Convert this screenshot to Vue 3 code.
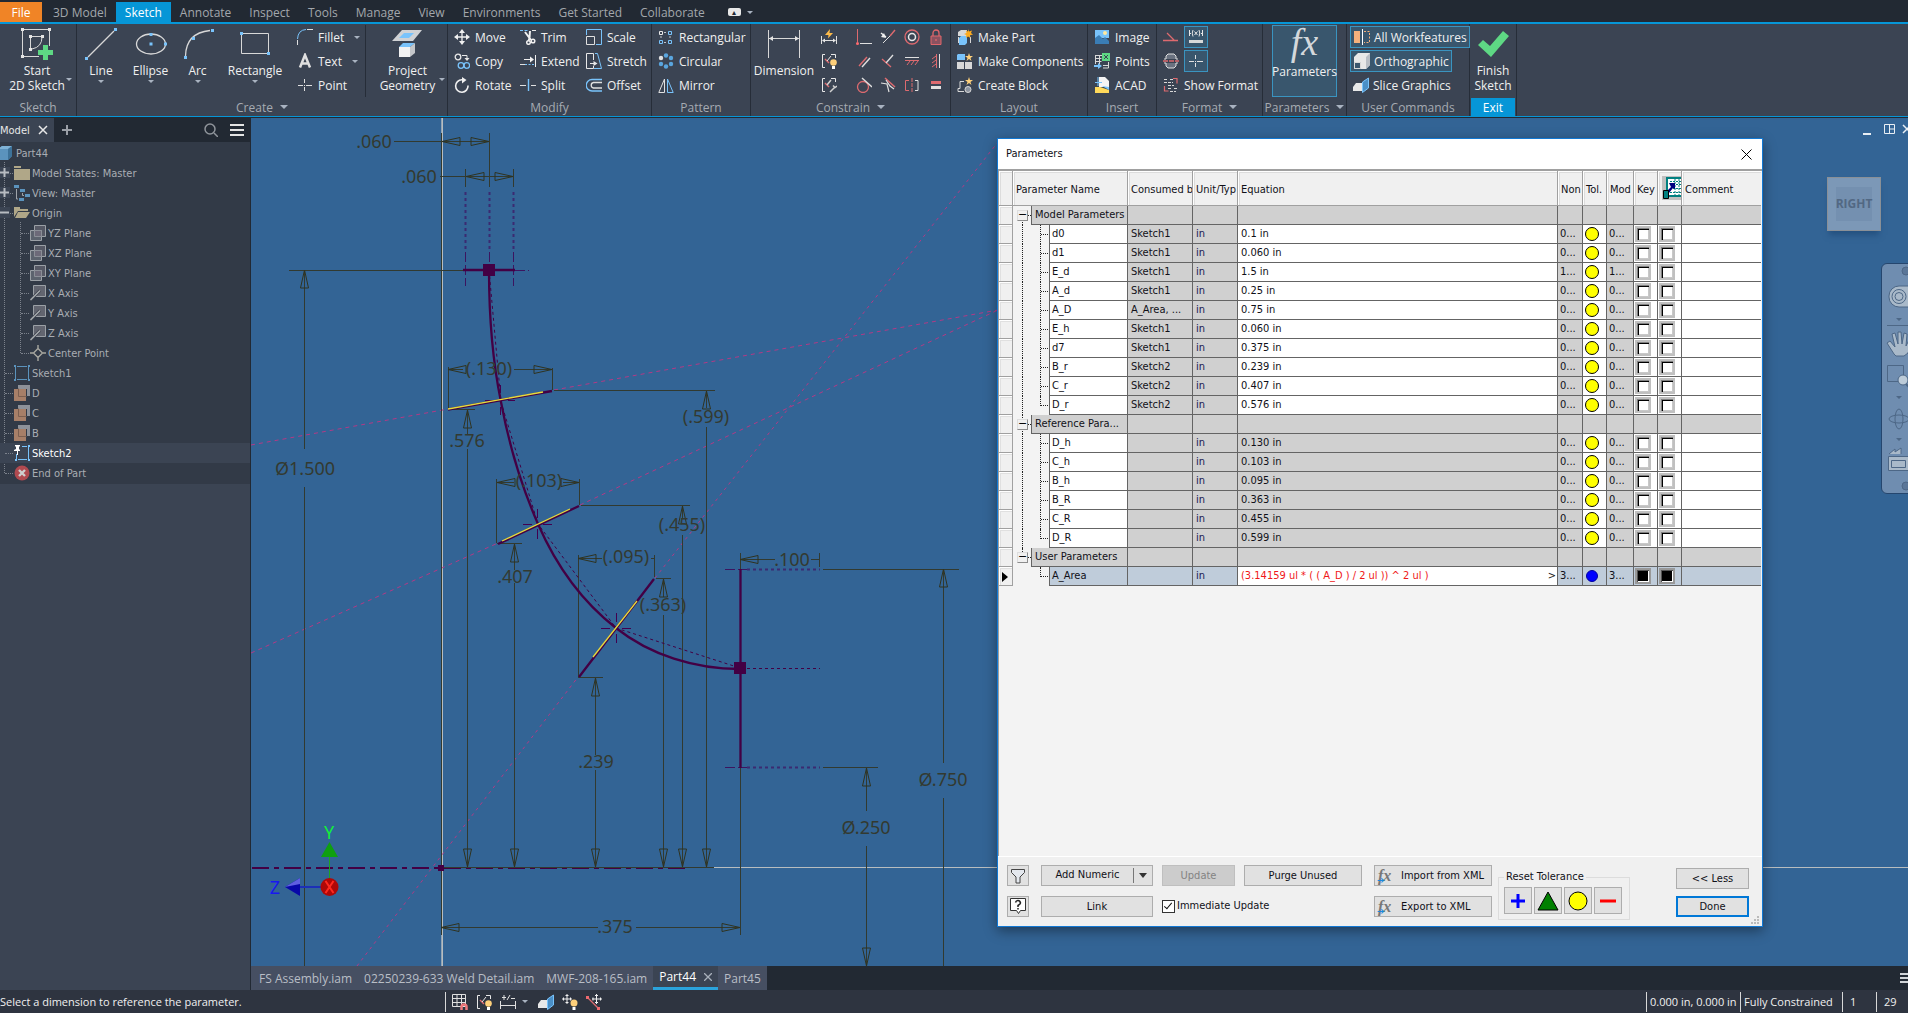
<script setup>
import { ref } from 'vue'

const menuTabs = [
  '3D Model', 'Sketch', 'Annotate', 'Inspect', 'Tools', 'Manage', 'View',
  'Environments', 'Get Started', 'Collaborate',
]

const big = (icon, lines, w, arrow = '') => ({ type: 'big', icon, lines, w, arrow })
const col = (w, items) => ({ type: 'col', w, items })

const panels = [
  { title: 'Sketch', w: 77, groups: [big('start', ['Start', '2D Sketch'], 74, 'side')] },
  {
    title: 'Create', w: 371, more: true, groups: [
      big('line', ['Line'], 48, 'below'),
      big('ellipse', ['Ellipse'], 51, 'below'),
      big('arc', ['Arc'], 43, 'below'),
      big('rect', ['Rectangle'], 72, 'below'),
      col(74, [['fillet', 'Fillet', true], ['text', 'Text', true], ['point', 'Point']]),
      { type: 'sep' },
      big('project', ['Project', 'Geometry'], 79, 'side'),
    ],
  },
  {
    title: 'Modify', w: 204, groups: [
      col(66, [['move', 'Move'], ['copy', 'Copy'], ['rotate', 'Rotate']]),
      col(66, [['trim', 'Trim'], ['extend', 'Extend'], ['split', 'Split']]),
      col(71, [['scale', 'Scale'], ['stretch', 'Stretch'], ['offset', 'Offset']]),
    ],
  },
  {
    title: 'Pattern', w: 99, groups: [
      col(98, [['prect', 'Rectangular'], ['pcirc', 'Circular'], ['mirror', 'Mirror']]),
    ],
  },
  {
    title: 'Constrain', w: 200, more: true, groups: [
      big('dimension', ['Dimension'], 66),
      { type: 'grid', w: 24, icons: ['autodim', 'showcon', 'consettings'] },
      { type: 'grid', w: 96, wide: true, icons: [
        'coincident', 'collinear', 'concentric', 'lock',
        'parallel', 'perpendicular', 'horizontal', 'vertical',
        'tangent', 'smooth', 'symmetric', 'equal'] },
    ],
  },
  {
    title: 'Layout', w: 137, groups: [
      col(136, [['mkpart', 'Make Part'], ['mkcomp', 'Make Components'], ['mkblock', 'Create Block']]),
    ],
  },
  {
    title: 'Insert', w: 69, groups: [
      col(68, [['image', 'Image'], ['points', 'Points'], ['acad', 'ACAD']]),
    ],
  },
  { title: 'Format', w: 106, more: true, groups: [{ type: 'format' }] },
  { title: 'Parameters', w: 84, more: true, groups: [{ type: 'params' }] },
  { title: 'User Commands', w: 123, groups: [{ type: 'user' }] },
]

const tree = [
  { t: 'Part44', d: 0, i: 'cube' },
  { t: 'Model States: Master', d: 1, i: 'folder', x: '+' },
  { t: 'View: Master', d: 1, i: 'viewrep', x: '+' },
  { t: 'Origin', d: 1, i: 'folderopen', x: '-' },
  { t: 'YZ Plane', d: 2, i: 'plane' },
  { t: 'XZ Plane', d: 2, i: 'plane' },
  { t: 'XY Plane', d: 2, i: 'plane' },
  { t: 'X Axis', d: 2, i: 'axis' },
  { t: 'Y Axis', d: 2, i: 'axis' },
  { t: 'Z Axis', d: 2, i: 'axis' },
  { t: 'Center Point', d: 2, i: 'centerpt' },
  { t: 'Sketch1', d: 1, i: 'sketch' },
  { t: 'D', d: 1, i: 'workplane' },
  { t: 'C', d: 1, i: 'workplane' },
  { t: 'B', d: 1, i: 'workplane' },
  { t: 'Sketch2', d: 1, i: 'sketchpin', sel: true },
  { t: 'End of Part', d: 1, i: 'eop' },
]

const row = (name, used, eq) => ({ name, used, eq, nom: eq.startsWith('1') ? '1...' : '0...' })
const sections = [
  {
    title: 'Model Parameters', kind: 'model', rows: [
      row('d0', 'Sketch1', '0.1 in'), row('d1', 'Sketch1', '0.060 in'),
      row('E_d', 'Sketch1', '1.5 in'), row('A_d', 'Sketch1', '0.25 in'),
      row('A_D', 'A_Area, ...', '0.75 in'), row('E_h', 'Sketch1', '0.060 in'),
      row('d7', 'Sketch1', '0.375 in'), row('B_r', 'Sketch2', '0.239 in'),
      row('C_r', 'Sketch2', '0.407 in'), row('D_r', 'Sketch2', '0.576 in'),
    ],
  },
  {
    title: 'Reference Para...', kind: 'reference', rows: [
      row('D_h', '', '0.130 in'), row('C_h', '', '0.103 in'), row('B_h', '', '0.095 in'),
      row('B_R', '', '0.363 in'), row('C_R', '', '0.455 in'), row('D_R', '', '0.599 in'),
    ],
  },
  {
    title: 'User Parameters', kind: 'user', rows: [
      { name: 'A_Area', used: '', eq: '(3.14159 ul * ( ( A_D ) / 2 ul )) ^ 2 ul )', nom: '3...', active: true },
    ],
  },
]
const immediate = ref(true)

/* dimension annotations of the sketch */
const dimLines = [
  'M394 141.5H489M440 176.5H513M489.500 133V187M465.500 169V187M513.500 169V187',
  'M289 270.500H463M304.500 270V449M304.500 487V970',
  'M448.500 367V408M552.500 368V390M448 369.500H463M514 369.500H552',
  'M448 409.500H475M467.500 410V434M467.500 449V867',
  'M554 390.500H715M706.500 391V408M706.500 427V867',
  'M496.500 479V543M579.500 479V505M497 482.500H514M563 482.500H579',
  'M497 543.500H522M514.500 544V570M514.500 583V867',
  'M581 505.500H690M682.500 506V518M682.500 535V867',
  'M578.500 555V677M654.500 555V577M578 558.500H602M651 558.500H654',
  'M656 578.500H671M663.500 579V597M663.500 615V867',
  'M578 677.500H603M595.500 678V755M595.500 770V867',
  'M740.500 553V569M740.500 768V935M819.500 553V567M740 559.500H775M811 559.500H819',
  'M441 927.500H598M636 927.500H740',
  'M823 569.500H959M943.500 569V763M943.500 798V970',
  'M823 767.500H878M866.500 768V811M866.500 846V966',
  'M442 867.500H714M441.500 133V935',
].join('')
const arrows = [
  [442, 141.5, 180], [489, 141.5, 0], [466, 176.5, 180], [513, 176.5, 0],
  [304.5, 270, -90], [448, 369.5, 180], [552, 369.5, 0], [467.5, 410, -90], [467.5, 867, 90],
  [706.5, 391, -90], [706.5, 867, 90], [497, 482.5, 180], [579, 482.5, 0],
  [514.5, 544, -90], [514.5, 867, 90], [682.5, 867, 90], [682.5, 506, -90],
  [578, 558.5, 180], [663.5, 579, -90], [663.5, 867, 90], [595.5, 678, -90], [595.5, 867, 90],
  [740, 559.5, 180], [441, 927.5, 180], [740, 927.5, 0], [943.5, 569, -90],
  [866.5, 768, -90], [866.5, 966, 90],
]
const dimTexts = [
  ['.060', 374, 148], ['.060', 419, 183], ['Ø1.500', 305, 475], ['(.130)', 489, 375],
  ['.576', 467, 447], ['(.599)', 706, 423], ['(.103)', 539, 487], ['.407', 515, 583],
  ['(.455)', 682, 531], ['(.095)', 626, 563], ['(.363)', 663, 611], ['.100', 792, 566],
  ['.239', 596, 768], ['.375', 615, 933], ['Ø.750', 943, 786], ['Ø.250', 866, 834],
]
</script>

<template>
  <div class="app">
    <svg class="defs" aria-hidden="true">
      <symbol id="i-start" viewBox="0 0 32 32"><g fill="none" stroke="#d8d8d8"><path d="M3 1.500H27M1.500 3V27M28.500 3V18M3 28.500H18"/><path d="M9.500 10V20M10 8.500H20M21 9Q21 19 11 21"/></g><path fill="#e4e4e4" d="M0 0h3v3H0zM27 0h3v3h-3zM0 27h3v3H0zM8 7h3v3H8zM20 7h3v3h-3zM8 20h3v3H8z"/><path fill="#5ed884" d="M22 17h5v5h5v5h-5v5h-5v-5h-5v-5h5z"/></symbol>
      <symbol id="i-line" viewBox="0 0 32 32"><path d="M3 29L29 3" stroke="#d8d8d8" stroke-width="1.300"/><path fill="#79c3fb" d="M0 29h3v3H0zM29 0h3v3h-3z"/></symbol>
      <symbol id="i-ellipse" viewBox="0 0 32 32"><ellipse cx="16" cy="16" rx="14.500" ry="10" fill="none" stroke="#d8d8d8" stroke-width="1.300"/><path fill="#79c3fb" d="M14.500 5h3v3h-3zM14.500 14.500h3v3h-3zM29 14.500h3v3h-3z"/></symbol>
      <symbol id="i-arc" viewBox="0 0 32 32"><path d="M3.500 28Q4 5 28 2.500" fill="none" stroke="#d8d8d8" stroke-width="1.300"/><path fill="#79c3fb" d="M2 28h3v3H2zM29 1h3v3h-3zM10 9h3v3h-3z"/></symbol>
      <symbol id="i-rect" viewBox="0 0 32 32"><path d="M2.500 5.500h27v20h-27z" fill="none" stroke="#d8d8d8"/><path fill="#79c3fb" d="M1 4h3v3H1zM28 24h3v3h-3z"/></symbol>
      <symbol id="i-project" viewBox="0 0 32 32"><path fill="#d0d2d5" d="M10 2h20L21 13H0z"/><path fill="#79c3fb" d="M12 5h10l-5 5H7z"/><path fill="#f2f2f2" d="M7 19h11v10H7z"/><path fill="#79c3fb" d="M7 19l4-4h12l-5 4z"/><path fill="#c4c6c9" d="M18 19l5-4v10l-5 4z"/></symbol>
      <symbol id="i-dimension" viewBox="0 0 32 32"><path d="M.5 2V30M31.500 2V30M1 10.500H31" stroke="#d8d8d8"/><path fill="#e4e4e4" d="M1 10.500l4-2.500v5zM31 10.500l-4-2.500v5z"/></symbol>
      <symbol id="i-finish" viewBox="0 0 32 32"><path fill="#5ed884" d="M1 17l5-5 7 6L26 3l6 5L14 29z"/></symbol>
      <symbol id="i-fillet" viewBox="0 0 16 16"><path d="M.5 10Q1 1 9 .5" fill="none" stroke="#79c3fb"/><path d="M10 .5h6M.5 11v5" stroke="#e0e0e0"/></symbol>
      <symbol id="i-text" viewBox="0 0 16 16"><path d="M3 14.500L8 2l5 12.500M4.500 10.500h7" fill="none" stroke="#e0e0e0" stroke-width="2.500"/></symbol>
      <symbol id="i-point" viewBox="0 0 16 16"><path d="M7.500 2v4M7.500 10v4M1 8.500h5M9 8.500h6M7 8.500h1" stroke="#e0e0e0"/></symbol>
      <symbol id="i-move" viewBox="0 0 16 16"><path d="M8 2v12M2 8h12" stroke="#f0f0f0" stroke-width="1.300"/><path fill="#f0f0f0" d="M8 0l3 4H5zM8 16l3-4H5zM0 8l4-3v6zM16 8l-4-3v6z"/></symbol>
      <symbol id="i-copy" viewBox="0 0 16 16"><circle cx="4" cy="4" r="2.800" fill="none" stroke="#e8e8e8" stroke-width="1.300"/><path d="M8 2.500h5v4" fill="none" stroke="#e8e8e8"/><path fill="#e8e8e8" d="M10.500 5h5L13 8z"/><g fill="none" stroke="#79c3fb" stroke-width="1.300"><circle cx="7" cy="12.500" r="2.800"/><circle cx="12.800" cy="12.500" r="2.800"/></g></symbol>
      <symbol id="i-rotate" viewBox="0 0 16 16"><path d="M14 8.500A6.200 6.200 0 1 1 8 2.800" fill="none" stroke="#f0f0f0" stroke-width="1.600"/><path fill="#f0f0f0" d="M8 0l4.500 3L8 6.500z"/></symbol>
      <symbol id="i-trim" viewBox="0 0 16 16"><path d="M0 1.500h8" stroke="#79c3fb" stroke-dasharray="3 1.500"/><path d="M12 1.500h4" stroke="#e8e8e8"/><path d="M5 3l6 8M10 2L9.500 9l-1 3" stroke="#f0f0f0" stroke-width="2" fill="none"/><g fill="none" stroke="#f0f0f0" stroke-width="1.500"><circle cx="8.500" cy="13.500" r="1.800"/><circle cx="13" cy="12" r="1.800"/></g></symbol>
      <symbol id="i-extend" viewBox="0 0 16 16"><path d="M15.500 2v12M4 6.500h8" stroke="#f0f0f0"/><path fill="#f0f0f0" d="M10 3.500l4 3-4 3z"/><path d="M0 11.500h5" stroke="#e0e0e0"/><path d="M5 11.500h10" stroke="#79c3fb" stroke-dasharray="2 1.500"/></symbol>
      <symbol id="i-split" viewBox="0 0 16 16"><path d="M0 8.500h6M11 8.500h5" stroke="#e0e0e0"/><path d="M8.500 2v12" stroke="#79c3fb" stroke-width="1.400"/></symbol>
      <symbol id="i-scale" viewBox="0 0 16 16"><path d="M.5 6V.5h15v15H10" fill="none" stroke="#79c3fb"/><path d="M.5 7.500h8v8h-8z" fill="none" stroke="#e0e0e0"/></symbol>
      <symbol id="i-stretch" viewBox="0 0 16 16"><path d="M7.500 7V.5h-7v15h7V13M4 10.500h5" fill="none" stroke="#e8e8e8"/><path fill="#e8e8e8" d="M7.500 8l4 2.500-4 2.500z"/><path d="M9 .5h2.500l4 15H8" fill="none" stroke="#79c3fb"/></symbol>
      <symbol id="i-offset" viewBox="0 0 16 16"><path d="M16 2.500H6a5.500 5.500 0 0 0 0 11.500h10" fill="none" stroke="#79c3fb" stroke-width="1.300"/><path d="M16 5.500H7.500a2.800 2.800 0 0 0 0 5.500H16" fill="none" stroke="#e0e0e0" stroke-width="1.300"/></symbol>
      <symbol id="i-prect" viewBox="0 0 16 16"><g fill="none"><path d="M1.500 2.500h3v3h-3z" stroke="#e8e8e8"/><path d="M10.500 2.500h3v3h-3zM1.500 11.500h3v3h-3zM10.500 11.500h3v3h-3z" stroke="#79c3fb"/><path d="M6 3.500h3M3 7v3M12 7v3M6 13.500h3" stroke="#c0c4ca" stroke-dasharray="2 1"/></g></symbol>
      <symbol id="i-pcirc" viewBox="0 0 16 16"><g fill="#5aa6df"><circle cx="8" cy="2.500" r="2.200"/><circle cx="13" cy="5" r="2.200"/><circle cx="13" cy="11" r="2.200"/><circle cx="8" cy="13.500" r="2.200"/><circle cx="3" cy="11" r="2.200"/></g><circle cx="3" cy="5" r="2.200" fill="#e0e0e0"/></symbol>
      <symbol id="i-mirror" viewBox="0 0 16 16"><path d="M6.500 2v13.500H.8z" fill="none" stroke="#e0e0e0"/><path d="M9.500 2v13.500h5.700z" fill="none" stroke="#79c3fb"/></symbol>
      <symbol id="i-autodim" viewBox="0 0 16 16"><path d="M.5 7v8M15.500 7v8M2 11.500h12" stroke="#e0e0e0"/><path fill="#e8e8e8" d="M1 11.500l3-2v4zM15 11.500l-3-2v4z"/><path fill="#fdbb4a" d="M9 0L4 6h3.500L7 9.500 12 4H8.500z"/></symbol>
      <symbol id="i-showcon" viewBox="0 0 16 16"><path d="M4 1.500H1.500v13H4M10 1.500h4.500V5" fill="none" stroke="#e8e8e8"/><path d="M4 6l4 4" stroke="#dd6a6f" stroke-width="1.500"/><path d="M6 8l4-5" stroke="#e8e8e8"/><circle cx="12.500" cy="9.500" r="3.300" fill="#fdcf7a"/><path d="M11 13h3v3h-3z" fill="#fff"/></symbol>
      <symbol id="i-consettings" viewBox="0 0 16 16"><path d="M4 1.500H1.500v13H4M10 1.500h4.500V5" fill="none" stroke="#e8e8e8"/><path d="M4 6l4 4" stroke="#dd6a6f" stroke-width="1.500"/><path d="M6 8l4-5M9 15l5-5M12 8.500l2 2 2-1.500" stroke="#d0d0d0" fill="none" stroke-width="1.500"/></symbol>
      <symbol id="i-coincident" viewBox="0 0 16 16"><path d="M1.500 0v13" stroke="#dd6a6f"/><circle cx="1.500" cy="14.500" r="1.500" fill="#ff6a6f"/><path d="M4 14.500h12" stroke="#e0e0e0"/></symbol>
      <symbol id="i-collinear" viewBox="0 0 16 16"><path d="M1 4l5 4" stroke="#f0f0f0" stroke-width="1.500"/><path fill="#f0f0f0" d="M6 9L1 8l3-4z"/><path d="M3 14l7-7" stroke="#e0e0e0"/><path d="M10 7l5-6" stroke="#dd6a6f" stroke-width="1.400"/></symbol>
      <symbol id="i-concentric" viewBox="0 0 16 16"><circle cx="8" cy="8" r="7" fill="none" stroke="#dd6a6f" stroke-width="1.300"/><circle cx="8" cy="8" r="3.500" fill="none" stroke="#e8e8e8" stroke-width="1.500"/></symbol>
      <symbol id="i-lock" viewBox="0 0 16 16"><path d="M3 7h10v8.500H3z" fill="#8b5260" stroke="#e0666b"/><path d="M5 7V4a3 3 0 0 1 6 0v3M8 10v2" fill="none" stroke="#e0666b" stroke-width="1.300"/></symbol>
      <symbol id="i-parallel" viewBox="0 0 16 16"><path d="M3 13L11 4" stroke="#dd6a6f" stroke-width="1.400"/><path d="M6 14l8-9" stroke="#e0e0e0" stroke-width="1.400"/></symbol>
      <symbol id="i-perpendicular" viewBox="0 0 16 16"><path d="M2 6l9 8" stroke="#dd6a6f" stroke-width="1.400"/><path d="M6 10l7-8" stroke="#e0e0e0" stroke-width="1.400"/></symbol>
      <symbol id="i-horizontal" viewBox="0 0 16 16"><path d="M1 4.500h14" stroke="#e0e0e0"/><path d="M1 7.500h14M3 12l3-4M7 12l3-4M11 12l3-4" stroke="#dd6a6f"/></symbol>
      <symbol id="i-vertical" viewBox="0 0 16 16"><path d="M11.500 1v14" stroke="#e0e0e0"/><path d="M8.500 1v14M4 6l4-3M4 10l4-3M4 14l4-3" stroke="#dd6a6f"/></symbol>
      <symbol id="i-tangent" viewBox="0 0 16 16"><circle cx="7" cy="10" r="5.500" fill="none" stroke="#dd6a6f" stroke-width="1.300"/><path d="M6 1l10 9" stroke="#e0e0e0" stroke-width="1.400"/></symbol>
      <symbol id="i-smooth" viewBox="0 0 16 16"><path d="M5 1l10 9" stroke="#dd6a6f" stroke-width="1.500"/><path d="M1 6l6 1 2 8M6 3l4 6 4 3" fill="none" stroke="#e0e0e0" stroke-width="1.200"/></symbol>
      <symbol id="i-symmetric" viewBox="0 0 16 16"><path d="M5 3.500H1.500v10H5" fill="none" stroke="#dd6a6f"/><path d="M11 3.500h3v10h-3" fill="none" stroke="#e0e0e0"/><path d="M8 1v14" stroke="#dd6a6f" stroke-dasharray="4 1"/></symbol>
      <symbol id="i-equal" viewBox="0 0 16 16"><path fill="#dd6a6f" d="M3 4h10v3H3z"/><path fill="#e0e0e0" d="M3 9h10v3H3z"/></symbol>
      <symbol id="i-mkpart" viewBox="0 0 16 16"><path fill="#d8d8d8" d="M1 3l3-2h6v6H1zM13 8h1v6h-1zM1 8h1v6H1z"/><path fill="#79c3fb" d="M2 9l2-2h6v7l-2 2H2z"/><path fill="#fdab1e" d="M11 0l1 2.500L15 1.500 14 4l2 1.500-3 .8.500 2.700L11 7.500 9 9l.3-3L7 5l2.500-1L9 1.500l2 1z"/></symbol>
      <symbol id="i-mkcomp" viewBox="0 0 16 16"><path fill="#79c3fb" d="M0 2l1-1h7v6H0z"/><path fill="#d8d8d8" d="M0 9h7v7H0zM8 9h7v7H8z"/><path fill="#fdcf7a" d="M12 0l1 3h3l-2.500 2 1 3-2.500-2-2.500 2 1-3L8 3h3z"/></symbol>
      <symbol id="i-mkblock" viewBox="0 0 16 16"><path d="M7 4.500H3v7H1v3h6" fill="none" stroke="#d8d8d8"/><circle cx="11" cy="12.500" r="3" fill="#8d949f" stroke="#d8d8d8"/><path fill="#fdcf7a" d="M12 0l1 3h3l-2.500 2 1 3-2.500-2-2.500 2 1-3L8 3h3z"/></symbol>
      <symbol id="i-image" viewBox="0 0 16 16"><path fill="#79c3fb" d="M1 1h14v8H1z"/><path fill="#3a7db5" d="M1 9l4-3 4 4 2-2 4 4v3H1z"/><circle cx="11" cy="4" r="2" fill="#ffe9a0"/></symbol>
      <symbol id="i-points" viewBox="0 0 16 16"><path d="M1.500 2.500h7M1.500 5.500h6M1.500 8.500h6M1.500 2v9M5.500 3v8M14.500 9v6H9M9 12.500h5" stroke="#d8d8d8" fill="none"/><path fill="#5ed884" d="M8 0h8v8H8z"/><path d="M10 2l4 4M14 2l-4 4" stroke="#3b4453"/><path fill="#79c3fb" d="M0 12h4v-2l4 3-4 3v-2H0z"/></symbol>
      <symbol id="i-acad" viewBox="0 0 16 16"><path fill="#f4f4f4" d="M5 0h6l4 4v6H5z"/><path fill="#ffd95a" d="M1 10l5 0 9 3v3H1z"/><path fill="#79c3fb" d="M8 9l7 1v3z"/><path d="M4 0v9M1 5.500h7" stroke="#79c3fb"/></symbol>
      <symbol id="i-constr" viewBox="0 0 16 16"><path d="M0 11.500h15M4 4l7 7" stroke="#dd6a6f" stroke-width="1.300"/></symbol>
      <symbol id="i-centerline" viewBox="0 0 16 16"><path d="M1 6h2V3l2-2h6l2 2v3h2M1 10h2v3l2 2h6l2-2v-3h2" fill="#6a7280" stroke="#e0e0e0"/><path d="M0 8h16" stroke="#dd6a6f" stroke-width="1.500" stroke-dasharray="5 1"/></symbol>
      <symbol id="i-showfmt" viewBox="0 0 16 16"><path d="M1 2.500h4M7 2.500h3M1 5.500h9M5 8.500h6M5 11.500h4M11 11.500h3M7 14.500h6" stroke="#d8d8d8" stroke-dasharray="3 1"/><path d="M10 1.500h4v5M1.500 9v5h4" fill="none" stroke="#dd6a6f" stroke-width="1.200"/></symbol>
      <symbol id="i-driven" viewBox="0 0 16 16"><path d="M1.500 1v6M14.500 1v6M1 4.500h2M13 4.500h2M5 1Q3.500 4 5 7.500M11 1q1.500 3 0 6.500M6.500 2.500l3 3.500M9.500 2.500l-3 3.500" fill="none" stroke="#e8e8e8"/><path fill="#d8d8d8" d="M1 11h14v3H1z"/></symbol>
      <symbol id="i-work" viewBox="0 0 16 16"><path fill="#f5b07c" d="M0 2h6v12H0z"/><path d="M8.500 0v16" stroke="#fff"/><path d="M10 2.500h5.500v11H10" fill="none" stroke="#f5b07c" stroke-dasharray="2 1.500"/></symbol>
      <symbol id="i-ortho" viewBox="0 0 16 16"><path fill="#e8e8e8" d="M0 4l4-4h12v12l-4 4H0z"/><path fill="#b9bec5" d="M12 4l4-4v12l-4 4z"/><path d="M.5 9.500h6v6h-6z" fill="#3a566e" stroke="#d8d8d8"/></symbol>
      <symbol id="i-slice" viewBox="0 0 16 16"><path fill="#e8e8e8" d="M0 10l3-4h6v8H0z"/><path fill="#4a8fc7" stroke="#79c3fb" d="M9.500 5l6-4v10l-6 4.500z"/></symbol>
      <symbol id="i-cube" viewBox="0 0 16 16"><path fill="#5b93bd" d="M0 4l4-3h10v10l-4 4H0z"/><path fill="#7fb2d6" d="M0 4l4-3h10l-4 3z"/><path fill="#3d7299" d="M10 4l4-3v10l-4 4z"/></symbol>
      <symbol id="i-folder" viewBox="0 0 16 16"><path fill="#b0a788" d="M0 1h7v3h9v11H0z"/><path d="M0 3.500h7" stroke="#323a47"/></symbol>
      <symbol id="i-folderopen" viewBox="0 0 16 16"><path fill="#b0a788" d="M0 2h6v2h8v2H4l-4 6zM4 7h12l-4 6H1z"/></symbol>
      <symbol id="i-viewrep" viewBox="0 0 16 16"><path fill="#5b93bd" d="M0 0h5v3H0zM6 4h5v3H6zM11 9h5v3h-5zM5 13h5v3H5z"/><path d="M2.500 4v10H4M8.500 8v2.500H10" fill="none" stroke="#a0a4aa"/></symbol>
      <symbol id="i-plane" viewBox="0 0 16 16"><path d="M4.500.5h11v11h-11z" fill="#565965" stroke="#9ba0a6"/><path d="M.5 5.500h11v10H.5z" fill="#5c636e" stroke="#9ba0a6"/><path d="M4.500 5.500h7v6h-7z" fill="#6d6a79" stroke="#8b8f97"/></symbol>
      <symbol id="i-axis" viewBox="0 0 16 16"><path d="M3.500.5h12v11h-12z" fill="#626570" stroke="#9ba0a6"/><path d="M0 15.500L10 5.500" stroke="#3c414d" stroke-width="3"/><path d="M.5 15L10 5.500" stroke="#a8acb0" stroke-width="1.400"/></symbol>
      <symbol id="i-centerpt" viewBox="0 0 16 16"><path d="M8 3.500L12.500 8 8 12.500 3.500 8zM8 0v3M8 13v3M0 8h3M13 8h3" fill="none" stroke="#a8a8a0" stroke-width="1.400"/></symbol>
      <symbol id="i-sketch" viewBox="0 0 16 16"><path d="M1.500 2v12M14.500 2v12M3 1.500h10M3 14.500h10" stroke="#5b93bd"/><path fill="#5b93bd" d="M0 0h2v2H0zM14 0h2v2h-2zM0 14h2v2H0zM14 14h2v2h-2z"/></symbol>
      <symbol id="i-sketchpin" viewBox="0 0 16 16"><path d="M2.500 9v5M14.500 2v12M8 1.500h5M4 14.500h9" stroke="#79c3fb"/><path fill="#79c3fb" d="M14 0h2v2h-2zM1 14h2v2H1zM14 14h2v2h-2z"/><path fill="#fff" d="M1 0h5v1L5 2v2l1 1v1H4v4H3V6H0V5l2-1V2L1 1z"/></symbol>
      <symbol id="i-workplane" viewBox="0 0 16 16"><path fill="#8d9199" d="M4 0h12v11h-3V4H4z"/><path fill="#a77f68" d="M0 4h12v12H0z"/><path d="M4.500 3.500v8h8" fill="none" stroke="#7b5f50"/></symbol>
      <symbol id="i-eop" viewBox="0 0 16 16"><circle cx="8" cy="8" r="7.500" fill="#b04a50"/><path d="M5 5l6 6M11 5l-6 6" stroke="#cfcfcf" stroke-width="2.400"/></symbol>
      <symbol id="i-grid" viewBox="0 0 16 16"><path d="M.5.5h13v12H.5zM.5 4.500h13M.5 8.500h13M5 .5v12M9.500.5v12" fill="none" stroke="#e0e0e0"/><path d="M9.500 16v-3a2.500 2.500 0 0 1 5 0v3" fill="none" stroke="#f0787c" stroke-width="2.500"/></symbol>
      <symbol id="i-tolerance" viewBox="0 0 16 16"><path d="M.5 7v8M15.500 7v8M1 11.500h14M2 3.500h4M4 1v5M7 6l3-5M11 4.500h4" stroke="#e0e0e0"/></symbol>
      <symbol id="i-dof" viewBox="0 0 16 16"><path d="M5 0v10M0 5h10M3.500 1.500h3M3.500 8.500h3M1.500 3.500v3M8.500 3.500v3" stroke="#f0f0f0"/><circle cx="12" cy="9" r="3.500" fill="#fdcf7a"/><path fill="#fff" d="M10.500 13h3v3h-3z"/></symbol>
      <symbol id="i-relax" viewBox="0 0 16 16"><path d="M1 3l12 12" stroke="#dd6a6f" stroke-width="1.300"/><path d="M0 2h3v3H0zM11 13h3v3h-3z" fill="#ee6a6f"/><path d="M10.500 0v10M6 5h10M9 1.500h3M9 8.500h3M7 3.500v3M14.500 3.500v3" stroke="#f0f0f0"/></symbol>
    </svg>

    <nav class="menubar">
      <button class="file">File</button>
      <button v-for="t in menuTabs" :key="t" class="mtab" :class="{ on: t === 'Sketch' }">{{ t }}</button>
      <button class="mini" aria-label="Minimize ribbon"><span class="minibox">▴</span><i class="dn"></i></button>
    </nav>

    <header class="ribbon">
      <section v-for="p in panels" :key="p.title" class="panel" :style="{ width: p.w + 'px' }">
        <div class="body">
          <template v-for="(g, gi) in p.groups" :key="gi">
            <button v-if="g.type === 'big'" class="big" :class="g.arrow" :style="{ width: g.w + 'px' }">
              <svg class="i32"><use :href="'#i-' + g.icon" /></svg>
              <span v-for="l in g.lines" :key="l">{{ l }}</span>
              <i v-if="g.arrow" class="dn"></i>
            </button>
            <div v-else-if="g.type === 'col'" class="col" :style="{ width: g.w + 'px' }">
              <button v-for="it in g.items" :key="it[0]" class="item">
                <svg class="i16"><use :href="'#i-' + it[0]" /></svg><span>{{ it[1] }}</span><i v-if="it[2]" class="dn"></i>
              </button>
            </div>
            <div v-else-if="g.type === 'sep'" class="vsep"></div>
            <div v-else-if="g.type === 'grid'" class="icons" :class="{ wide: g.wide }" :style="{ width: g.w + 'px' }">
              <button v-for="ic in g.icons" :key="ic" :aria-label="ic"><svg class="i16"><use :href="'#i-' + ic" /></svg></button>
            </div>
            <div v-else-if="g.type === 'format'" class="col">
              <div class="item"><svg class="i16"><use href="#i-constr" /></svg><button class="tog" aria-label="Driven dimension"><svg class="i16"><use href="#i-driven" /></svg></button></div>
              <div class="item"><svg class="i16"><use href="#i-centerline" /></svg><button class="tog" aria-label="Center point"><svg class="i16"><use href="#i-point" /></svg></button></div>
              <button class="item"><svg class="i16"><use href="#i-showfmt" /></svg><span>Show Format</span></button>
            </div>
            <button v-else-if="g.type === 'params'" class="fxbtn"><span class="fx">fx</span><span>Parameters</span></button>
            <div v-else class="col user">
              <button class="item boxed"><svg class="i16"><use href="#i-work" /></svg><span>All Workfeatures</span></button>
              <button class="item boxed"><svg class="i16"><use href="#i-ortho" /></svg><span>Orthographic</span></button>
              <button class="item plain"><svg class="i16"><use href="#i-slice" /></svg><span>Slice Graphics</span></button>
            </div>
          </template>
        </div>
        <div class="ptitle">{{ p.title }}<i v-if="p.more" class="dn lg"></i></div>
      </section>
      <section class="panel exit">
        <div class="body">
          <button class="big"><svg class="i32"><use href="#i-finish" /></svg><span>Finish</span><span>Sketch</span></button>
        </div>
        <div class="ptitle">Exit</div>
      </section>
    </header>

    <main class="work">
      <aside class="browser">
        <div class="bhead">
          <button class="btab">Model<svg width="10" height="10"><path d="M1 1l8 8M9 1l-8 8" stroke="#e8e8e8" stroke-width="1.500" /></svg></button>
          <button class="plus" aria-label="Add"><svg width="10" height="10"><path d="M5 0v10M0 5h10" stroke="#9a9fa6" stroke-width="2" /></svg></button>
          <button class="right" aria-label="Search"><svg width="14" height="14"><circle cx="6" cy="6" r="5" fill="none" stroke="#8f949b" stroke-width="1.500" /><path d="M10 10l4 4" stroke="#8f949b" stroke-width="1.500" /></svg></button>
          <button aria-label="Menu"><svg width="14" height="12"><path d="M0 1h14M0 6h14M0 11h14" stroke="#e4e4e4" stroke-width="2" /></svg></button>
        </div>
        <ul class="tree">
          <li v-for="n in tree" :key="n.t" :class="['d' + n.d, { sel: n.sel }]">
            <span v-if="n.x" class="exp">
              <svg width="9" height="9"><path :d="n.x === '+' ? 'M4.500 0v9M0 4.500h9' : 'M0 4.500h9'" stroke="#b8bcc2" stroke-width="2" /></svg>
            </span>
            <svg class="i16"><use :href="'#i-' + n.i" /></svg><span>{{ n.t }}</span>
          </li>
        </ul>
      </aside>

      <section class="view">
        <div class="canvas">
          <svg class="drawing" aria-label="Sketch2 drawing">
            <g transform="translate(-251 -118)">
              <g stroke="#b8bdbf"><path d="M442.500 118V970" /><path d="M441.500 118V133M441.500 935V970" stroke="#8fa3b5" /><path d="M714 867.500H4000" /></g>
              <g fill="none" stroke="#b23a86" stroke-dasharray="4 4">
                <path d="M251 445L448 409M554 390L998 310M251 653L498 543M580 505L998 310" />
                <path d="M357 966L578 677M655 578L998 142" stroke-dasharray="3 4" />
              </g>
              <path d="M252 868H690" stroke="#430044" stroke-width="2" stroke-dasharray="17 5 5 5" />
              <g fill="none" stroke="#3b2a72" stroke-width="2" stroke-dasharray="3 3">
                <path d="M465.500 192V252M489.500 192V252M513.500 192V252M747 569.500H820M747 767.500H820" />
                <path d="M747 668.500H820" stroke="#430044" stroke-width="1" />
              </g>
              <g fill="none" stroke="#3c1560" stroke-dasharray="10 3">
                <path d="M465.500 252V286M513.500 252V286M489.500 252V266M515 270.500H529M725 569.500H747M725 767.500H747" />
              </g>
              <path d="M485 400.500h8M508 400.500h7M500.500 385v8M500.500 407v8M523 524.500h9M543 524.500h9M537.500 509v9M537.500 529v10M601 628.500h9M622 628.500h9M616.500 613v9M616.500 634v9" stroke="#430050" fill="none" />
              <path :d="dimLines" fill="none" stroke="#323a30" />
              <g fill="none" stroke="#2f3320">
                <path v-for="(a, i) in arrows" :key="i" d="M0 0L-18 -4V4Z" :transform="`translate(${a[0]} ${a[1]}) rotate(${a[2]})`" />
              </g>
              <path d="M489 270L501 402L538 524L616 628L740 668" fill="none" stroke="#430044" stroke-dasharray="3 3" />
              <g fill="none" stroke="#430044" stroke-width="2.300">
                <path d="M489 270C489 320 493 363 501 402C509 445 521 485 538 524C555 563 580 600 616 628C650 655 695 669 740 669M463 270H515M740.500 569V768" />
                <path d="M448 409.500L552 391M498 544L579 506M579 677L654 579" />
              </g>
              <path d="M448 409L543 392M502 541L570 509M593 657L637 601" stroke="#e6dc3c" stroke-width="1.300" />
              <path d="M483 264h12v12h-12zM734 662h12v12h-12zM438 865h6v6h-6z" fill="#430044" />
              <g class="dimtext">
                <text v-for="(t, i) in dimTexts" :key="i" :x="t[1]" :y="t[2]">{{ t[0] }}</text>
              </g>
              <path d="M329.500 857V880" stroke="#1fa51f" /><path d="M300 887H322" stroke="#1c2fb8" stroke-width="2" />
              <path d="M329.500 842L338 857H321z" fill="#0fa00f" /><path d="M285 887L300 878V896z" fill="#0808a8" /><path d="M285 887L300 878V884z" fill="#5f5fe0" />
              <circle cx="329.500" cy="887" r="9" fill="#b00808" /><path d="M325.500 881L333.500 893M333.500 881L325.500 893" stroke="#ff2a20" stroke-width="2" />
              <g class="triad"><text x="329" y="839" fill="#12f03a">Y</text><text x="275" y="894" fill="#1818f0">Z</text></g>
            </g>
          </svg>

          <div class="wctl">
            <svg width="48" height="14"><path d="M1 11h8" stroke="#e8eef4" stroke-width="2" /><path d="M22.500 1.500h10v9h-10zM27.500 1.500v9M27.500 6h5" fill="none" stroke="#e8eef4" /><path d="M41 2l8 8M49 2l-8 8" stroke="#e8eef4" stroke-width="1.500" /></svg>
          </div>
          <div class="cube"><span>RIGHT</span></div>
          <div class="navbar">
            <svg width="40" height="230">
              <g fill="#a9b9c9" stroke="#4d6786">
                <circle cx="24" cy="7" r="4" fill="#5a7698" /><rect x="7" y="22" width="30" height="21" rx="10" /><circle cx="17" cy="32.500" r="7" /><circle cx="17" cy="32.500" r="4" />
                <path d="M12 90l-7-11 3-2 5 6-3-13 3-1 3 11 0-12 3 0 1 12 2-11 3 1-1 12 3-6 3 1-4 12-4 3h-8z" />
                <path d="M5.500 101.500h16v16h-16z" fill="none" /><circle cx="21" cy="116" r="5" fill="#bccbd8" /><path d="M24 120l5 5" stroke-width="2" />
                <ellipse cx="17" cy="155" rx="4" ry="10" fill="none" /><ellipse cx="17" cy="155" rx="10" ry="4" fill="none" />
                <path d="M6.500 192.500h28v14h-28zM9.500 196.500h14v7h-14zM7 190l6-5v3l6-4v6" /><circle cx="24" cy="222" r="4" fill="#5a7698" />
              </g>
              <path d="M5 61.500h35" stroke="#4d6786" /><path d="M14 54h6l-3 3zM14 132h6l-3 3zM14 174h6l-3 3z" fill="#4d6786" />
            </svg>
          </div>

          <div class="dialog" role="dialog" aria-label="Parameters">
            <div class="dtitle"><span>Parameters</span><button aria-label="Close"><svg width="11" height="11"><path d="M.5.5l10 10M10.500.5l-10 10" stroke="#000" /></svg></button></div>
            <div class="gridwrap">
              <table>
                <colgroup><col class="c0"><col class="c1"><col class="c2"><col class="c3"><col><col class="c5"><col class="c6"><col class="c7"><col class="c8"><col class="c8"><col class="c10"></colgroup>
                <thead>
                  <tr>
                    <th></th><th>Parameter Name</th><th>Consumed b</th><th>Unit/Typ</th><th>Equation</th><th>Non</th><th>Tol.</th><th>Mod</th><th>Key</th>
                    <th class="exph"><svg width="20" height="24"><path fill="#c0c0c0" d="M0 0h20v24H0z" /><path fill="#fff" stroke="#008080" stroke-width="2" d="M5 2h18v18H5z" /><path d="M8 5.500h12M8 8.500h12M8 12.500h12M8 16.500h12M13 3v16M17 3v16" stroke="#008080" stroke-dasharray="2 1" /><path fill="#000080" d="M7 7h6v6l-2-1-4 5-2-2 4-4z" /><path fill="#008080" stroke="#000" d="M1.500 14.500h5v8h-5z" /></svg></th>
                    <th>Comment</th>
                  </tr>
                </thead>
                <tbody v-for="s in sections" :key="s.kind" :class="s.kind">
                  <tr class="group">
                    <td class="sel"></td>
                    <td class="namecell"><div><span class="gtree"><b>−</b></span><span class="nm">{{ s.title }}</span></div></td>
                    <td v-for="k in 9" :key="k"></td>
                  </tr>
                  <tr v-for="r in s.rows" :key="r.name" :class="{ active: r.active }">
                    <td class="sel"><svg v-if="r.active" width="12" height="18"><path d="M3 5l6 5-6 5z" fill="#000" /></svg></td>
                    <td class="namecell"><div><span class="trunk"></span><span class="branch"></span><span class="nm">{{ r.name }}</span></div></td>
                    <td class="ro">{{ r.used }}</td>
                    <td class="ro unit">in</td>
                    <td class="eq"><div>{{ r.eq }}<i v-if="r.active">&gt;</i></div></td>
                    <td class="ro v">{{ r.nom }}</td>
                    <td class="tol"><span class="dot"></span></td>
                    <td class="ro v">{{ r.nom }}</td>
                    <td class="ck"><input type="checkbox" :checked="r.active" :aria-label="r.name + ' key'"></td>
                    <td class="ck"><input type="checkbox" :checked="r.active" :aria-label="r.name + ' export'"></td>
                    <td></td>
                  </tr>
                </tbody>
              </table>
            </div>
            <div class="dfoot">
              <div class="stack sq">
                <button aria-label="Filter"><svg width="14" height="16"><path d="M.5 1.500h13v3L9 9v6H5V9L.5 4.500z" fill="#e4e8ee" stroke="#444" /></svg></button>
                <button aria-label="Help"><svg width="16" height="17"><path d="M.5.5h15v12h-5l-2 3-2-3h-6z" fill="#fff" stroke="#333" /><path d="M5.500 4.500Q6 2.500 8 2.500T10.500 5Q10.500 6 8 7.500V9M8 10v1.500" fill="none" stroke="#222" stroke-width="1.500" /></svg></button>
              </div>
              <div class="stack s1"><button class="split"><span>Add Numeric</span><i></i></button><button>Link</button></div>
              <div class="mid">
                <div><button class="upd" disabled>Update</button><button class="purge">Purge Unused</button></div>
                <label><input v-model="immediate" type="checkbox">Immediate Update</label>
              </div>
              <div class="stack s2">
                <button><span class="xml">fx</span>Import from XML</button>
                <button><span class="xml">fx</span>Export to XML</button>
              </div>
              <fieldset>
                <legend>Reset Tolerance</legend>
                <button aria-label="Upper"><svg width="18" height="18"><path d="M9 2v14M2 9h14" stroke="#0000ff" stroke-width="3" /></svg></button>
                <button aria-label="Median"><svg width="22" height="20"><path d="M11 1L21 19H1z" fill="#008000" stroke="#000" /></svg></button>
                <button aria-label="Nominal"><svg width="20" height="20"><circle cx="10" cy="10" r="9" fill="#ff0" stroke="#000" /></svg></button>
                <button aria-label="Lower"><svg width="18" height="18"><path d="M1 9h16" stroke="#ff0000" stroke-width="3" /></svg></button>
              </fieldset>
              <div class="stack s3"><button>&lt;&lt; Less</button><button class="done">Done</button></div>
              <svg class="grip" width="8" height="8"><path fill="#bbb" d="M6 0h2v2H6zM3 3h2v2H3zM6 3h2v2H6zM0 6h2v2H0zM3 6h2v2H3zM6 6h2v2H6z" /></svg>
            </div>
          </div>
        </div>

        <nav class="docs">
          <button>FS Assembly.iam</button><button>02250239-633 Weld Detail.iam</button><button>MWF-208-165.iam</button>
          <button class="on">Part44<svg width="8" height="8"><path d="M0 0l8 8M8 0L0 8" stroke="#a8b0ba" stroke-width="1.300" /></svg></button><button>Part45</button>
          <svg class="burger" width="12" height="10"><path d="M0 1h12M0 5h12M0 9h12" stroke="#d0d4d8" stroke-width="2" /></svg>
        </nav>
      </section>
    </main>

    <footer class="status">
      <span class="hint">Select a dimension to reference the parameter.</span>
      <div class="tools">
        <svg class="i16"><use href="#i-grid" /></svg><svg class="i16"><use href="#i-showcon" /></svg><svg class="i16"><use href="#i-tolerance" /></svg><i class="dn"></i><svg class="i16"><use href="#i-slice" /></svg><svg class="i16"><use href="#i-dof" /></svg><svg class="i16"><use href="#i-relax" /></svg>
      </div>
      <div class="coords"><span>0.000 in, 0.000 in</span><span class="fc">Fully Constrained</span><span class="one">1</span><span class="cnt">29</span></div>
    </footer>
  </div>
</template>

<style>
body { overflow: hidden; background: #222933; }
</style>

<style scoped>
.app { height: 100vh; display: flex; flex-direction: column; overflow: hidden; font: 12px/15px "Open Sans", "Noto Sans", sans-serif; color: #f0f0f0; background: #222933; }
.app *, .app *::before, .app *::after { box-sizing: border-box; }
button { font: inherit; color: inherit; background: none; border: 0; padding: 0; white-space: nowrap; }
.defs { position: absolute; width: 0; height: 0; }
svg { display: block; flex: none; }
.i16 { width: 16px; height: 16px; }
.i32 { width: 32px; height: 32px; }
.dn { width: 0; height: 0; border: 3px solid transparent; border-top-color: #a9b3c1; border-bottom: 0; }
.dn.lg { border-width: 4px; border-bottom: 0; margin-left: 7px; }

.menubar { display: flex; height: 24px; padding-top: 2px; border-bottom: 2px solid #0696d7; color: #a3a7ac; flex: none; }
.file { background: #f08426; color: #fff; width: 42px; margin-right: 2px; }
.mtab { padding: 0 9px; }
.mtab.on { background: #0696d7; color: #fff; }
.mini { display: flex; align-items: center; gap: 6px; margin-left: 14px; }
.minibox { background: #e8e8e8; color: #222933; width: 13px; height: 8px; border-radius: 2px; font-size: 8px; line-height: 7px; }

.ribbon { display: flex; height: 93px; background: #3b4453; border-bottom: 1px solid #0696d7; flex: none; margin-bottom: 1px; }
.panel { flex: none; border-right: 1px solid #262d38; display: flex; flex-direction: column; }
.body { display: flex; height: 74px; padding-top: 1px; }
.ptitle { height: 18px; display: flex; justify-content: center; align-items: center; color: #a6abb2; white-space: nowrap; }
.big { position: relative; display: flex; flex-direction: column; align-items: center; padding-top: 3px; }
.big .i32 { margin-bottom: 3px; }
.big.side .dn { position: absolute; right: 2px; top: 53px; }
.big.below .dn { margin-top: 2px; }
.col { display: flex; flex-direction: column; padding-left: 6px; }
.item { display: flex; align-items: center; height: 24px; gap: 5px; }
.item .dn { margin-left: 5px; }
.vsep { width: 1px; height: 72px; background: #262d38; margin-right: 2px; }
.icons { display: flex; flex-wrap: wrap; height: 72px; }
.icons.wide { margin-left: 11px; }
.icons button { width: 24px; height: 24px; display: flex; align-items: center; justify-content: center; }
.tog { width: 24px; height: 22px; border: 1px solid #3a94c0; background: #39566d; display: flex; align-items: center; justify-content: center; }
.fxbtn { width: 65px; height: 72px; margin-left: 9px; border: 1px solid #3a94c0; background: #39566d; display: flex; flex-direction: column; align-items: center; }
.fx { font: italic 38px/32px "Liberation Serif", serif; height: 38px; color: #d4d8dc; }
.user { padding-left: 3px; align-items: flex-start; }
.user .item { padding: 0 2px 0 3px; gap: 4px; }
.user .boxed { height: 22px; border: 1px solid #3a94c0; background: #39566d; margin: 1px 0; }
.exit { width: 47px; }
.exit .body { justify-content: center; }
.exit .ptitle { background: #0696d7; color: #fff; margin: 0 1px; }

.work { flex: 1; display: flex; min-height: 0; }
.browser { width: 251px; flex: none; border-right: 1px solid #222933; background: #3b4453; display: flex; flex-direction: column; color: #a9adb3; font-family: "DejaVu Sans Condensed", "Noto Sans", sans-serif; font-size: 11px; }
.bhead { display: flex; height: 24px; background: #222933; align-items: center; flex: none; padding-right: 6px; gap: 12px; }
.btab { display: flex; align-items: center; gap: 8px; width: 54px; height: 24px; background: #3b4453; color: #e8e8e8; }
.plus { margin-left: -4px; }
.right { margin-left: auto; }
.tree { list-style: none; margin: 0; padding: 1px 0; background: #323a47; position: relative; }
.tree::before, .tree::after { content: ""; position: absolute; left: 4px; top: 20px; bottom: 11px; border-left: 1px dotted #7c828c; }
.tree::after { left: 20px; top: 80px; bottom: 131px; }
.tree li { position: relative; z-index: 1; height: 20px; display: flex; align-items: center; gap: 2px; white-space: nowrap; }
.tree li.d0 { margin-left: -2px; }
.tree li.d1 { padding-left: 14px; }
.tree li.d2 { padding-left: 30px; }
.tree li.d1::before, .tree li.d2::before { content: ""; position: absolute; left: 5px; width: 8px; border-top: 1px dotted #7c828c; }
.tree li.d2::before { left: 21px; }
.tree li.sel { background: #3b4453; color: #fff; }
.exp { position: absolute; left: -1px; top: 4px; width: 11px; height: 11px; background: #3b4453; display: flex; align-items: center; justify-content: center; }

.view { flex: 1; min-width: 0; display: flex; flex-direction: column; }
.canvas { flex: 1; position: relative; overflow: hidden; background: #336495; }
.drawing { position: absolute; width: 100%; height: 100%; }
.dimtext { font: 18px "Noto Sans", sans-serif; fill: #333a30; text-anchor: middle; }
.triad { font: 18px "Noto Sans", sans-serif; text-anchor: middle; }
.wctl { position: absolute; right: -2px; top: 5px; }
.cube { position: absolute; right: 27px; top: 59px; width: 54px; height: 54px; background: #7c98b7; border: 1px solid #8a9097; display: flex; align-items: center; justify-content: center; box-shadow: 0 6px 6px -2px #24507f; }
.cube span { background: #7490b0; padding: 9px 0; font: bold 12px/16px "Open Sans", sans-serif; color: #526883; }
.navbar { position: absolute; right: -14px; top: 145px; width: 41px; height: 231px; border: 1px solid #25466e; border-radius: 6px; background: #6f8db0; overflow: hidden; }

.dialog { position: absolute; right: 145px; top: 20px; width: 766px; height: 789px; background: #f0f0f0; border: 1px solid #1178d4; color: #101018; font: 11px/14px "DejaVu Sans Condensed", "Noto Sans", sans-serif; display: flex; flex-direction: column; box-shadow: 0 4px 12px #0006; }
.dtitle { height: 30px; background: #fff; display: flex; align-items: center; justify-content: space-between; padding: 0 10px 0 8px; flex: none; }
.gridwrap { flex: 1; min-height: 0; background: #f3f3f3; border: 1px solid #a0a0a0; border-width: 2px 0 0 1px; box-shadow: 0 1px #fff; overflow: hidden; padding-right: 1px; }
table { border-collapse: separate; border-spacing: 0; table-layout: fixed; width: 100%; }
.c0 { width: 14px; } .c1 { width: 115px; } .c2 { width: 65px; } .c3 { width: 45px; } .c5 { width: 25px; } .c6 { width: 24px; } .c7 { width: 27px; } .c8 { width: 24px; } .c10 { width: 79px; }
th { height: 35px; padding: 3px 3px 0; font-weight: normal; text-align: left; overflow: hidden; white-space: nowrap; background: #f0f0f0; border-right: 1px solid #a0a0a0; border-bottom: 1px solid #a0a0a0; box-shadow: inset 1px 1px #fff, inset 2px 2px #dcdcdc; }
th.exph { padding: 0 0 0 4px; }
td { height: 19px; padding: 0 3px; overflow: hidden; white-space: nowrap; background: #fff; border-right: 1px solid #646464; border-bottom: 1px solid #646464; line-height: 14px; }
th:last-child, td:last-child { border-right: 0; }
td.sel { padding: 0; background: #f0f0f0; border-color: #a0a0a0; box-shadow: inset 1px 1px #fff, inset 2px 2px #e0e0e0; }
.namecell { padding: 0; background: #f3f3f3; border-bottom: 0; }
.namecell div { display: flex; height: 19px; }
.nm { flex: 1; border-left: 1px solid #646464; border-bottom: 1px solid #646464; background: #fff; padding: 2px 0 0 2px; }
.gtree { width: 18px; position: relative; display: flex; align-items: center; }
.gtree b { width: 11px; height: 11px; margin-left: 4px; border: 1px solid #8c8c8c; border-top-color: #ddd; border-left-color: #ddd; background: #f0f0f0; font: 11px/8px "DejaVu Sans", sans-serif; text-align: center; color: #000; position: relative; z-index: 1; }
.gtree::before { content: ""; position: absolute; left: 9px; top: 0; bottom: 0; border-left: 1px dotted #222; }
.gtree::after { content: ""; position: absolute; left: 15px; width: 3px; border-top: 1px dotted #222; }
.model .gtree::before { top: 9px; }
.user .gtree::before { bottom: 9px; }
.trunk { width: 18px; position: relative; }
.trunk::before { content: ""; position: absolute; left: 9px; top: 0; bottom: 0; border-left: 1px dotted #222; }
tbody.user .trunk::before { display: none; }
.branch { width: 18px; position: relative; }
.branch::before { content: ""; position: absolute; left: 9px; top: 0; bottom: 0; border-left: 1px dotted #222; }
tr:last-child .branch::before { bottom: 9px; }
.branch::after { content: ""; position: absolute; left: 10px; right: 1px; top: 9px; border-top: 1px dotted #222; }
.group td:not(.sel):not(.namecell), .group .nm, .ro, .reference .eq { background: #d0d0d0; }
.group .nm { padding-left: 3px; }
.unit { color: #1a1a50; }
.eq div { display: flex; justify-content: space-between; }
.eq i { font-style: normal; color: #222; margin-right: -2px; }
td.v { padding: 0 2px; }
td.tol { padding: 0 0 0 2px; }
.dot { display: block; width: 14px; height: 14px; border-radius: 7px; border: 1px solid #000; background: #ff0; }
td.ck { padding: 0 0 0 1px; }
.ck input { appearance: none; display: block; margin: 0; width: 16px; height: 16px; border: 2px solid #c0c0c0; background: #fff; box-shadow: inset 1px 1px #808080, inset 2px 2px #000, inset -1px -1px #c8c8c8; }
.ck input:checked { background: #000; border-color: #999; box-shadow: inset 1px 1px #555, inset -1px -1px #fff; }
.active .ro, .active .nm, .active .tol, .active .ck, .active td:last-child { background: #bfccda; }
.active .dot { background: #00f; border-color: #0000a0; width: 12px; height: 12px; margin-left: 1px; }
.active .eq { color: #f01818; }

.dfoot { position: relative; flex: none; height: 70px; display: flex; padding: 9px 13px 0 9px; }
.dfoot button { background: #e1e1e1; border: 1px solid #adadad; height: 21px; display: flex; align-items: center; justify-content: center; }
.stack { display: flex; flex-direction: column; gap: 10px; }
.sq { width: 22px; margin-right: 12px; }
.s1 { width: 112px; margin-right: 9px; }
.dfoot .split { justify-content: space-between; }
.split span { flex: 1; border-right: 1px solid #777; height: 15px; }
.split i { border: 4px solid transparent; border-top: 5px solid #333; border-bottom: 0; margin: 0 5px; }
.mid > div { display: flex; gap: 9px; margin-bottom: 13px; }
.mid .upd { width: 73px; background: #ccc; border-color: #bfbfbf; color: #838383; }
.mid .purge { width: 118px; }
.mid label { display: flex; align-items: center; gap: 2px; }
.mid input { appearance: none; margin: 0; width: 13px; height: 13px; border: 1px solid #333; background: #fff; position: relative; }
.mid input:checked::after { content: ""; position: absolute; left: 3px; top: 0; width: 4px; height: 8px; border: solid #111; border-width: 0 1px 1px 0; transform: rotate(40deg); }
.s2 { width: 118px; margin: 0 6px 0 12px; }
.s2 button { justify-content: flex-start; }
.xml { font: italic bold 16px/14px "Liberation Serif", serif; color: #777; width: 26px; padding-left: 3px; text-align: left; position: relative; }
.xml::after { content: "➔"; position: absolute; left: 2px; top: 7px; font: 9px/9px "DejaVu Sans", sans-serif; color: #1a8ae0; }
fieldset { margin: 5px 0 0; padding: 0 5px; border: 1px solid #dcdcdc; width: 132px; height: 50px; display: flex; gap: 2px; min-width: 0; }
legend { padding: 0 2px; }
fieldset button { width: 28px; }
.dfoot fieldset button { height: 27px; margin-top: 3px; }
.s3 { width: 73px; margin: 3px 0 0 auto; gap: 7px; }
.dfoot .done { border: 2px solid #0078d7; }
.grip { position: absolute; right: 3px; bottom: 2px; }

.docs { height: 24px; flex: none; display: flex; background: #222933; color: #b9bec6; }
.docs button { background: #464f62; padding: 0 6px; }
.docs button:first-child { padding-left: 8px; }
.docs .on { background: #3b4453; color: #fff; border-bottom: 3px solid #2ba3dc; display: flex; align-items: center; gap: 8px; }
.burger { margin: 7px -4px 0 auto; }

.status { height: 23px; flex: none; background: #2e3440; display: flex; align-items: center; font-size: 11px; }
.hint { width: 446px; border-right: 1px solid #d8d8d8; height: 20px; line-height: 20px; white-space: nowrap; }
.tools { display: flex; align-items: center; gap: 8px; padding-left: 6px; }
.tools .dn { margin: 0 2px 0 -2px; }
.coords { margin-left: auto; display: flex; line-height: 20px; white-space: nowrap; }
.coords span { border-left: 1px solid #d8d8d8; padding-left: 3px; width: 94px; }
.coords .fc { width: 102px; }
.coords .one { width: 34px; padding-left: 7px; }
.coords .cnt { width: 32px; padding-left: 7px; }
</style>
